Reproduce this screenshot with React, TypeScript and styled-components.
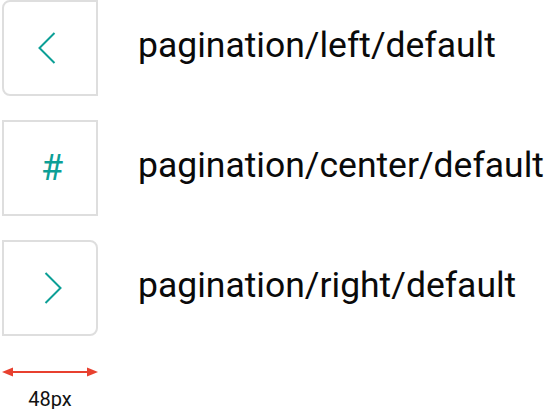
import React from "react";
import styled, { createGlobalStyle, css } from "styled-components";

type Side = "left" | "center" | "right";

const GlobalStyle = createGlobalStyle`
  html, body {
    margin: 0;
    padding: 0;
    background: #ffffff;
    font-family: Roboto, "Liberation Sans", sans-serif;
  }
`;

const Page = styled.div`
  display: flex;
  flex-direction: column;
  gap: 24px;
  padding: 0 0 0 2px;
`;

const Row = styled.div`
  display: flex;
  align-items: center;
  gap: 40px;
`;

const Tile = styled.div<{ $side: Side }>`
  box-sizing: border-box;
  width: 96px;
  height: 96px;
  flex: none;
  display: flex;
  align-items: center;
  justify-content: center;
  border: 2px solid #dedede;
  background: #ffffff;
  color: #0c9f96;
  ${(p) =>
    p.$side === "left" &&
    css`
      border-radius: 8px 0 0 8px;
    `}
  ${(p) =>
    p.$side === "right" &&
    css`
      border-radius: 0 8px 8px 0;
    `}
`;

const Hash = styled.span`
  font-size: 36px;
  line-height: 1;
  margin-left: 4px;
`;

const Label = styled.div`
  font-size: 35.5px;
  line-height: 1;
  color: #0a0a0a;
  white-space: nowrap;
  margin-top: -4px;
`;

const Measure = styled.div`
  display: flex;
  flex-direction: column;
  align-items: center;
  width: 96px;
  margin-top: 6px;
  gap: 11px;
`;

const MeasureText = styled.div`
  font-size: 20px;
  line-height: 1;
  color: #111111;
`;

const Chevron = ({ dir }: { dir: "left" | "right" }) => (
  <svg width="20" height="34" viewBox="0 0 20 34" style={{ marginLeft: dir === "left" ? -6 : 6 }}>
    <polyline
      points={dir === "left" ? "17.5,2 2.5,17 17.5,32" : "2.5,2 17.5,17 2.5,32"}
      fill="none"
      stroke="currentColor"
      strokeWidth="2"
    />
  </svg>
);

const Arrow = () => (
  <svg width="96" height="12" viewBox="0 0 96 12">
    <line x1="8" y1="6" x2="88" y2="6" stroke="#e8402f" strokeWidth="2" />
    <polygon points="0,6 11,1.5 11,10.5" fill="#e8402f" />
    <polygon points="96,6 85,1.5 85,10.5" fill="#e8402f" />
  </svg>
);

const items: { side: Side; label: string }[] = [
  { side: "left", label: "pagination/left/default" },
  { side: "center", label: "pagination/center/default" },
  { side: "right", label: "pagination/right/default" },
];

const App = () => (
  <>
    <GlobalStyle />
    <Page>
      {items.map((it) => (
        <Row key={it.side}>
          <Tile $side={it.side}>
            {it.side === "center" ? <Hash>#</Hash> : <Chevron dir={it.side} />}
          </Tile>
          <Label>{it.label}</Label>
        </Row>
      ))}
      <Measure>
        <Arrow />
        <MeasureText>48px</MeasureText>
      </Measure>
    </Page>
  </>
);

export default App;
